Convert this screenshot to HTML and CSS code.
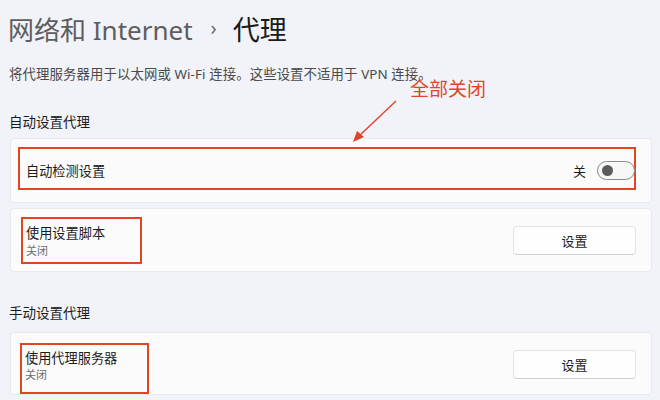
FILE: index.html
```html
<!DOCTYPE html>
<html lang="zh-CN">
<head>
<meta charset="utf-8">
<link rel="stylesheet" href="styles.css">
</head>
<body>
<div class="page">
  <h1 class="title"><span class="crumb">网络和 Internet</span><span class="chev">›</span><span class="current">代理</span></h1>
  <p class="desc">将代理服务器用于以太网或 Wi-Fi 连接。这些设置不适用于 VPN 连接。</p>

  <h2 class="section">自动设置代理</h2>
  <div class="card card-auto">
    <div class="mark mark-auto">
      <span class="label">自动检测设置</span>
      <div class="toggle-wrap">
        <span class="state">关</span>
        <span class="toggle"><span class="knob"></span></span>
      </div>
    </div>
  </div>
  <div class="card card-row">
    <div class="mark mark-script">
      <span class="label">使用设置脚本</span>
      <span class="sub">关闭</span>
    </div>
    <button class="btn">设置</button>
  </div>

  <h2 class="section section-manual">手动设置代理</h2>
  <div class="card card-row card-manual">
    <div class="mark mark-manual">
      <span class="label">使用代理服务器</span>
      <span class="sub">关闭</span>
    </div>
    <button class="btn">设置</button>
  </div>

  <div class="note">全部关闭</div>
  <svg class="arrow" width="60" height="50" viewBox="0 0 60 50">
    <line x1="45" y1="3" x2="8" y2="38" stroke="#e2432a" stroke-width="1.4"/>
    <polygon points="2,44 6,33 13,39" fill="#e2432a"/>
  </svg>
</div>
</body>
</html>
```

FILE: styles.css
```css
html, body {
  margin: 0;
  padding: 0;
}
body {
  background: #f1f3f8;
  font-family: "Noto Sans", "Noto Sans CJK SC", sans-serif;
  color: #1b1b1b;
  width: 660px;
  height: 400px;
  overflow: hidden;
}
.page {
  position: relative;
  padding: 0 8px 0 10px;
}
.title {
  margin: 0 0 0 -2px;
  padding-top: 11px;
  height: 38px;
  font-size: 26px;
  font-weight: 400;
  line-height: 38px;
  display: flex;
  align-items: center;
  letter-spacing: 0;
}
.crumb {
  color: #5d5d5d;
}
.chev {
  color: #6a6a6a;
  font-size: 20px;
  margin: 0 16px 0 18px;
  position: relative;
  top: -2px;
}
.current {
  color: #1a1a1a;
  font-size: 27px;
}
.desc {
  margin: 15px 0 0 -1px;
  font-size: 13.4px;
  line-height: 20px;
  color: #4a4a4a;
  letter-spacing: 0.1px;
}
.section {
  margin: 28px 0 0 -1px;
  font-size: 13.5px;
  font-weight: 400;
  line-height: 20px;
  color: #1b1b1b;
}
.section-manual {
  margin-top: 31px;
}
.card {
  width: 642px;
  box-sizing: border-box;
  background: #fbfbfc;
  border: 1px solid #e8e9ec;
  border-radius: 4px;
}
.card-auto {
  margin-top: 6px;
  height: 65px;
  padding: 8px 15px 0 7px;
}
.mark {
  border: 2px solid #e2451f;
  box-sizing: border-box;
}
.mark-auto {
  height: 43px;
  display: flex;
  align-items: center;
  justify-content: space-between;
  padding: 4px 0 0 6px;
}
.label {
  font-size: 13.2px;
  line-height: 18px;
  color: #1b1b1b;
}
.toggle-wrap {
  display: flex;
  align-items: center;
  margin-right: -1px;
}
.state {
  font-size: 13px;
  margin-right: 11px;
}
.toggle {
  width: 38px;
  height: 19px;
  box-sizing: border-box;
  border: 1px solid #8a8a8a;
  border-radius: 10px;
  display: flex;
  align-items: center;
  padding-left: 4px;
  background: #f7f7f7;
}
.knob {
  width: 11px;
  height: 11px;
  border-radius: 50%;
  background: #5c5c5c;
}
.card-row {
  margin-top: 5px;
  height: 64px;
  display: flex;
  align-items: center;
  justify-content: space-between;
  padding: 0 15px 0 10px;
}
.card-manual {
  margin-top: 9px;
  height: 63px;
  padding-left: 9px;
}
.mark-script, .mark-manual {
  display: flex;
  flex-direction: column;
  padding: 5px 0 0 3px;
}
.mark-script {
  width: 121px;
  height: 47px;
  margin-top: 1px;
}
.mark-script .sub {
  margin-top: 1px;
}
.mark-manual {
  width: 129px;
  height: 51px;
  margin-top: 10px;
  padding-top: 4px;
}
.sub {
  font-size: 11px;
  line-height: 16px;
  color: #6b6b6b;
}
.btn {
  width: 123px;
  height: 29px;
  box-sizing: border-box;
  background: #fefefe;
  border: 1px solid #e3e3e3;
  border-bottom-color: #cfcfcf;
  border-radius: 4px;
  font-family: "Noto Sans", "Noto Sans CJK SC", sans-serif;
  font-size: 13px;
  color: #1b1b1b;
  padding: 0;
}
.card-manual .btn {
  margin-top: 2px;
}
.note {
  position: absolute;
  left: 410px;
  top: 77px;
  font-size: 19px;
  line-height: 24px;
  color: #e4432a;
  letter-spacing: 0;
}
.arrow {
  position: absolute;
  left: 351px;
  top: 98px;
}
```
